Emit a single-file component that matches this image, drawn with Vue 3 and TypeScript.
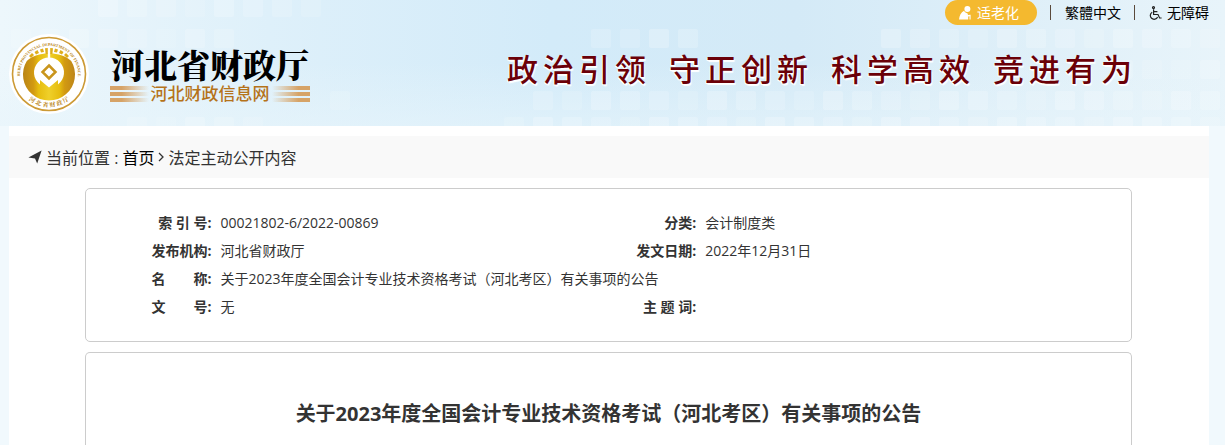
<script setup lang="ts">
interface Tile { x: number; y: number; o: number }
interface Cluster { y: number; from: number; to: number; o: number }

const slogans: string[] = ['政治引领', '守正创新', '科学高效', '竞进有为']

const clusters: Cluster[] = [
  { y: -2, from: 3, to: 10, o: 0.12 },
  { y: 29, from: 0, to: 7, o: 0.1 },
  { y: 29, from: 20, to: 23, o: 0.14 },
  { y: 29, from: 30, to: 41, o: 0.14 },
  { y: 60, from: 38, to: 41, o: 0.1 },
  { y: 91, from: 11, to: 11, o: 0.14 },
  { y: 91, from: 18, to: 41, o: 0.13 },
  { y: 117, from: 4, to: 8, o: 0.1 },
  { y: 117, from: 17, to: 41, o: 0.14 },
]
const tiles: Tile[] = clusters.flatMap(({ y, from, to, o }) =>
  Array.from({ length: to - from + 1 }, (_, i) => ({
    x: 11 + (from + i) * 29,
    y,
    o: o + (((from + i) * 7 + y) % 4) * 0.03,
  })),
)
</script>

<template>
  <div class="page">
    <header class="header">
      <svg class="tiles" aria-hidden="true">
        <rect v-for="(t, i) in tiles" :key="i" :x="t.x" :y="t.y" width="20" height="19" rx="2" fill="#fff" :fill-opacity="t.o" />
      </svg>
      <nav class="tools">
        <a href="#" class="pill">
          <svg width="14" height="14" viewBox="0 0 14 14" fill="#fff" aria-hidden="true">
            <circle cx="8.4" cy="3" r="3" />
            <path d="M0 13.6C.4 9.6 2 6.6 5 4.8C5.8 6.4 7 7.2 8.6 7.4L9 9L11.6 8.8V13.6H10.5V10.2L9.2 10.4V13.6Z" />
          </svg>
          <span>适老化</span>
        </a>
        <span class="bar"></span>
        <a href="#">繁體中文</a>
        <span class="bar"></span>
        <a href="#" class="access">
          <svg width="13" height="14" viewBox="0 0 13 14" fill="none" stroke="#222" stroke-width="1.2" aria-hidden="true">
            <circle cx="4.5" cy="1.6" r="1" />
            <path d="M4.6 3.2V8.5H9L10.6 12H12.6M4.6 5.6H8.4M3.2 6.2A3.8 3.8 0 1 0 8.6 11" />
          </svg>
          <span>无障碍</span>
        </a>
      </nav>
      <div class="banner">
        <a href="#" class="brand" aria-label="河北省财政厅 河北财政信息网">
          <svg class="seal" width="80" height="80" viewBox="0 0 80 80" aria-hidden="true">
            <defs>
              <linearGradient id="gold" x1="0" y1="0" x2="1" y2="0">
                <stop offset="0" stop-color="#b98416" />
                <stop offset=".2" stop-color="#d29a12" />
                <stop offset=".3" stop-color="#e6bd10" />
                <stop offset=".5" stop-color="#efd02a" />
                <stop offset=".7" stop-color="#e6bd10" />
                <stop offset=".8" stop-color="#d29a12" />
                <stop offset="1" stop-color="#bd8518" />
              </linearGradient>
              <path id="arcTop" d="M12.5 50A29 29 0 1 1 67.5 50" />
              <path id="arcBottom" d="M15 61.5A33 33 0 0 0 65 61.5" />
            </defs>
            <circle cx="40" cy="40" r="40" fill="#fff" />
            <circle cx="40" cy="40" r="36.5" fill="#fff" stroke="#cc9a35" stroke-width="1.6" />
            <path fill="url(#gold)" d="M17.8 27A26 26 0 1 0 62.2 27C56 21.5 49 19.5 41.2 19.5V25H38.8V19.5C31 19.5 24 21.5 17.8 27Z" />
            <path fill="#dfae1c" d="M20 22L23 19L25 21L22 24ZM25.5 18L28.5 16L30 19L27 20.5ZM31 15.5L34 14.5L35 18L32 18.5ZM36 14.2L38.8 14V20H36.6ZM41.2 14L44 14.2L43.4 20H41.2ZM46 14.5L49 15.5L48 18.5L45 18ZM51.5 16L54.5 18L53 20.5L50 19ZM57 19L60 22L58 24L55 21Z" />
            <path fill="#fff" d="M31 54V50.5A15 15 0 1 1 49 50.5V54V46L40 53.5L31 46Z" />
            <path fill="none" stroke="#c9951c" stroke-width="2.5" d="M40 31.5L46.5 38L40 44.5L33.5 38Z" />
            <text class="seal-en"><textPath href="#arcTop" startOffset="50%" text-anchor="middle">HEBEI PROVINCIAL DEPARTMENT OF FINANCE</textPath></text>
            <text class="seal-zh"><textPath href="#arcBottom" startOffset="50%" text-anchor="middle">河 北 省 财 政 厅</textPath></text>
          </svg>
          <span class="names">
            <span class="name">河北省财政厅</span>
            <span class="sub">
              <span class="lines"><i></i><i></i><i></i></span>
              <span>河北财政信息网</span>
              <span class="lines right"><i></i><i></i><i></i></span>
            </span>
          </span>
        </a>
        <p class="slogan"><span v-for="s in slogans" :key="s">{{ s }}</span></p>
      </div>
    </header>
    <main class="content">
      <nav class="crumbs">
        <svg width="14" height="14" viewBox="0 0 14 14" fill="#333" aria-hidden="true"><path d="M13.6 .6L9.2 13.4L7 8.4L.4 7.6Z" /></svg>
        <span>当前位置 :</span>
        <a href="#">首页</a>
        <svg class="chevron" width="6" height="10" viewBox="0 0 6 10" fill="none" stroke="#333" stroke-width="1.3" aria-hidden="true"><path d="M1 1L5 5L1 9" /></svg>
        <span>法定主动公开内容</span>
      </nav>
      <section class="card">
        <table>
          <colgroup><col class="label"><col class="value"><col class="label"><col></colgroup>
          <tbody>
            <tr><th scope="row">索 引 号:</th><td>00021802-6/2022-00869</td><th scope="row">分类:</th><td>会计制度类</td></tr>
            <tr><th scope="row">发布机构:</th><td>河北省财政厅</td><th scope="row">发文日期:</th><td>2022年12月31日</td></tr>
            <tr><th scope="row">名　　称:</th><td colspan="3">关于2023年度全国会计专业技术资格考试（河北考区）有关事项的公告</td></tr>
            <tr><th scope="row">文　　号:</th><td>无</td><th scope="row">主 题 词:</th><td></td></tr>
          </tbody>
        </table>
      </section>
      <article class="card article">
        <h1>关于2023年度全国会计专业技术资格考试（河北考区）有关事项的公告</h1>
      </article>
    </main>
  </div>
</template>

<style>
body { margin: 0; }
</style>

<style scoped>
.page {
  min-height: 100vh;
  background: #f1f9fd;
  font-family: "Open Sans", "Noto Sans CJK SC", sans-serif;
  font-size: 14px;
  color: #333;
}
a { color: #000; text-decoration: none; }
.header {
  position: relative;
  height: 126px;
  background:
    linear-gradient(180deg, #e8f5fb00 50%, #e8f5fb90 100%),
    linear-gradient(90deg, #edf7fc 0%, #def0fa 22%, #d3ebf9 45%, #d4eaf7 65%, #e8f4fa 100%);
}
.tiles { position: absolute; inset: 0; width: 100%; height: 100%; }
.tools {
  position: relative;
  display: flex;
  justify-content: flex-end;
  align-items: center;
  height: 25px;
  line-height: 18px;
  padding-right: 16px;
}
.pill, .access { display: flex; align-items: center; }
.pill {
  gap: 4px;
  height: 25px;
  padding: 0 18px 0 14px;
  border-radius: 13px;
  background: #f4b92f;
  color: #fff;
}
.access { gap: 5px; }
.bar { width: 1px; height: 15px; margin: 0 14px 0 13px; background: #5a4a3c; }
.banner {
  position: relative;
  display: flex;
  justify-content: space-between;
  align-items: center;
  padding: 9px 88px 0 9px;
}
.brand { display: flex; align-items: center; gap: 21px; }
.seal { display: block; }
.seal-en { font: bold 4px "Liberation Serif", serif; fill: #b98520; }
.seal-zh { font: bold 6px "Noto Serif CJK SC", "Noto Sans CJK SC", serif; fill: #b98520; }
.names { display: flex; flex-direction: column; width: 200px; }
.name {
  font-family: "Noto Serif CJK SC", "Noto Sans CJK SC", serif;
  font-size: 33px;
  line-height: 40px;
  font-weight: 900;
  text-align: center;
  white-space: nowrap;
}
.sub {
  display: flex;
  align-items: center;
  gap: 2px;
  font-size: 17px;
  line-height: 20px;
  font-weight: 500;
  color: #b5731a;
  white-space: nowrap;
}
.lines { display: grid; flex: 1; gap: 2px; }
.lines i { height: 4px; background: linear-gradient(90deg, #d6a367 30%, #d6a36700); }
.lines.right i { background: linear-gradient(270deg, #d6a367 30%, #d6a36700); }
.slogan {
  display: flex;
  gap: 18px;
  margin: 0;
  padding-bottom: 10px;
  color: #6b0008;
  font-size: 31px;
  line-height: 40px;
  font-weight: 500;
  letter-spacing: 5px;
  white-space: nowrap;
  text-shadow: -1px 1px 0 #fff, 1px 2px 1px #fff;
}
.content {
  margin: 0 16px 0 9px;
  padding-top: 10px;
  background: #fff;
}
.crumbs {
  display: flex;
  align-items: center;
  gap: 4px;
  height: 42px;
  padding-left: 19px;
  background: #f9f9f9;
  font-size: 16px;
}
.card {
  margin: 10px 77px 0 76px;
  border: 1px solid #ccc;
  border-radius: 5px;
}
table {
  width: 100%;
  margin: 20px 0;
  border-collapse: collapse;
  table-layout: fixed;
}
.label { width: 12%; }
.value { width: 34.4%; }
th, td { height: 28px; padding: 0; line-height: 28px; }
th { text-align: right; font-weight: 700; }
th + td { padding-left: 9px; }
.article {
  display: flow-root;
  min-height: 92px;
  border-bottom: 0;
  border-radius: 5px 5px 0 0;
}
h1 {
  margin: 46px 0 0;
  font-size: 20px;
  line-height: 30px;
  text-align: center;
}
</style>
